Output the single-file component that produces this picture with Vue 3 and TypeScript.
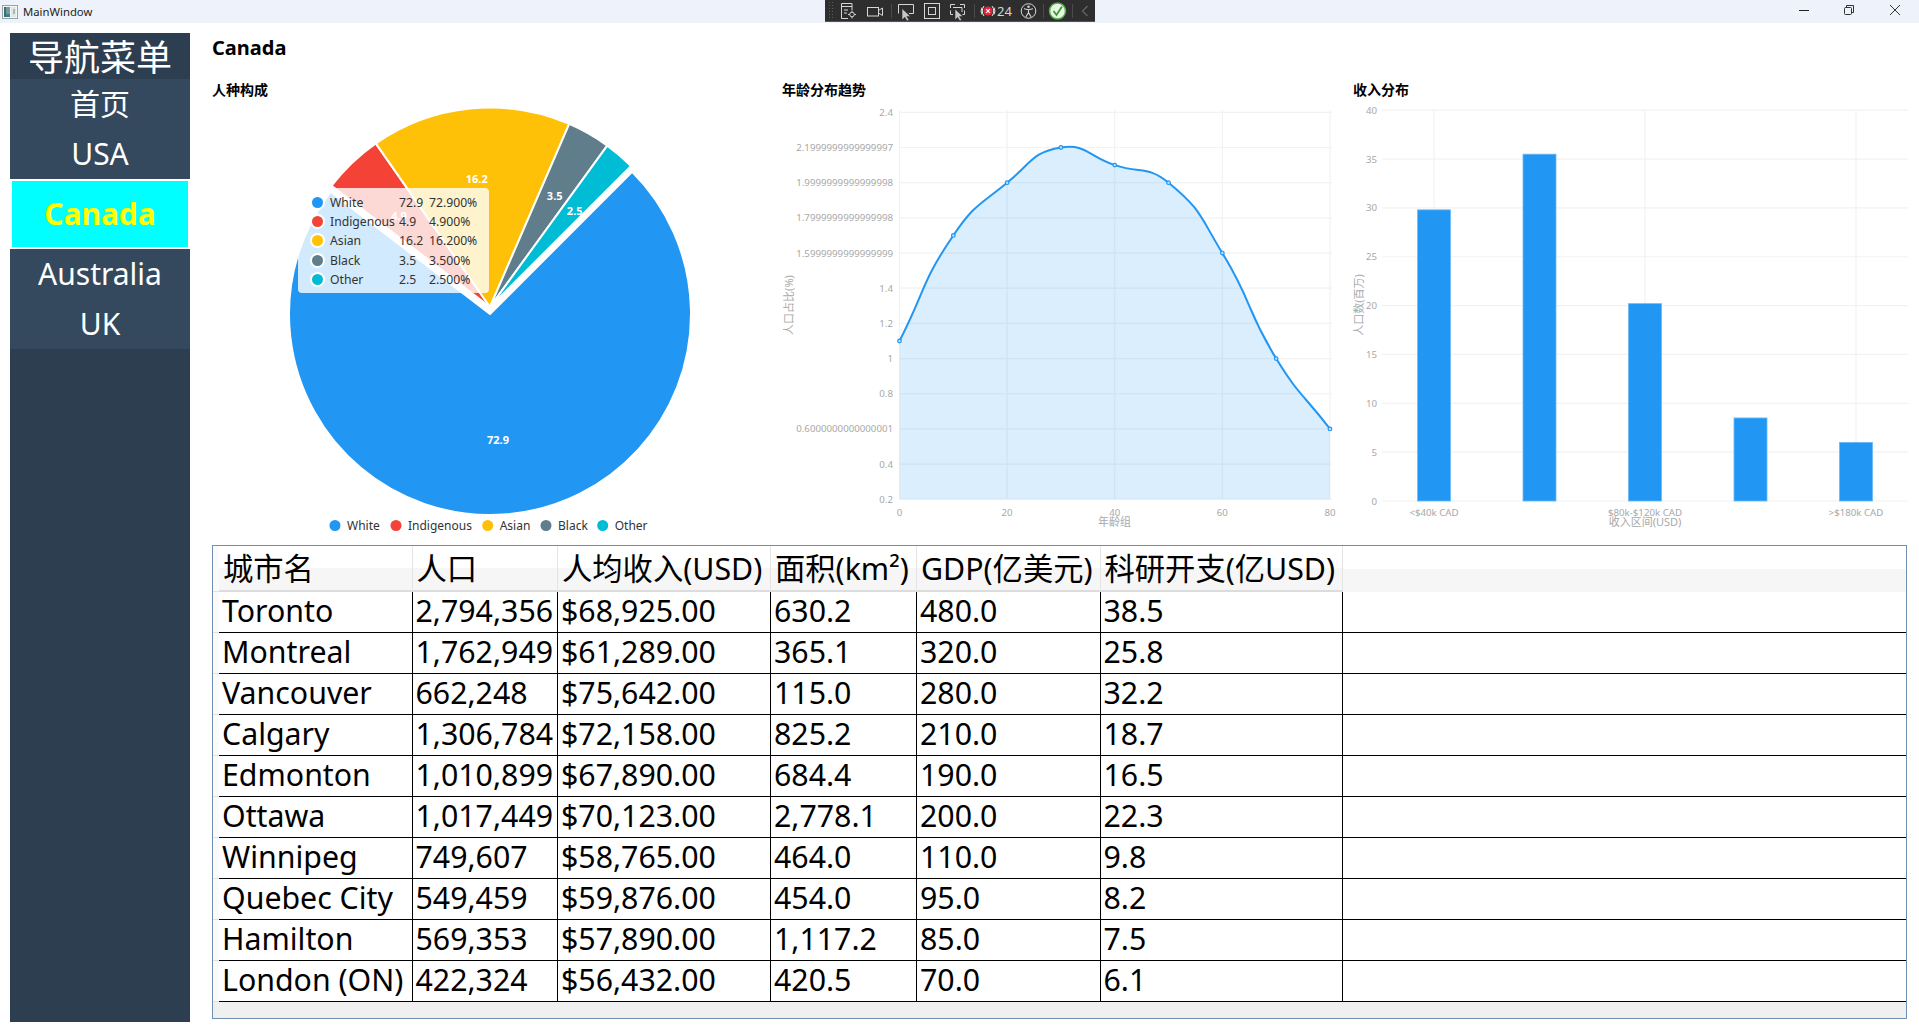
<script setup lang="ts">
const navItems = [
  { label: '首页', active: false },
  { label: 'USA', active: false },
  { label: 'Canada', active: true },
  { label: 'Australia', active: false },
  { label: 'UK', active: false },
]

interface Slice { name: string; value: number; color: string }
const slices: Slice[] = [
  { name: 'White', value: 72.9, color: '#2196F3' },
  { name: 'Indigenous', value: 4.9, color: '#F44336' },
  { name: 'Asian', value: 16.2, color: '#FFC107' },
  { name: 'Black', value: 3.5, color: '#607D8B' },
  { name: 'Other', value: 2.5, color: '#00BCD4' },
]
const pieLabels = [
  { t: '4.9', x: 399, y: 216 },
  { t: '16.2', x: 476.7, y: 179 },
  { t: '3.5', x: 554.7, y: 196 },
  { t: '2.5', x: 574.7, y: 211 },
  { t: '72.9', x: 498, y: 440 },
]
const legend = [
  { name: 'White', cx: 335, color: '#2196F3' },
  { name: 'Indigenous', cx: 396, color: '#F44336' },
  { name: 'Asian', cx: 487.7, color: '#FFC107' },
  { name: 'Black', cx: 546, color: '#607D8B' },
  { name: 'Other', cx: 602.7, color: '#00BCD4' },
]

function polar(cx: number, cy: number, r: number, deg: number): [number, number] {
  const a = (deg * Math.PI) / 180
  return [cx + r * Math.sin(a), cy - r * Math.cos(a)]
}
let angle = 45
const pieSlices = slices.map((s, i) => {
  const sweep = (s.value / 100) * 360
  const cx = 490
  const cy = i === 0 ? 314 : 307
  const r = i === 0 ? 201 : 199.5
  const [x0, y0] = polar(cx, cy, r, angle)
  const [x1, y1] = polar(cx, cy, r, angle + sweep)
  const large = sweep > 180 ? 1 : 0
  const d = `M${cx} ${cy}L${x0.toFixed(2)} ${y0.toFixed(2)}A${r} ${r} 0 ${large} 1 ${x1.toFixed(2)} ${y1.toFixed(2)}Z`
  angle += sweep
  return { d, color: s.color }
})

// line chart
const lx = (v: number) => 899.5 + v * 5.381
const ly = (v: number) => 499.3 - ((v - 0.2) / 0.2) * 35.18
const lineTicks = ['2.4', '2.1999999999999997', '1.9999999999999998', '1.7999999999999998', '1.5999999999999999', '1.4', '1.2', '1', '0.8', '0.6000000000000001', '0.4', '0.2']
  .map((t, i) => ({ t, y: ly(2.4 - i * 0.2) }))
const lineXTicks = [0, 20, 40, 60, 80].map((v) => ({ t: String(v), x: lx(v) }))
const linePts = [
  [0, 1.1], [10, 1.7], [20, 2.0], [30, 2.2], [40, 2.1], [50, 2.0], [60, 1.6], [70, 1.0], [80, 0.6],
].map(([a, b]) => ({ x: lx(a), y: ly(b) }))

function smoothPath(p: { x: number; y: number }[]): string {
  const s = 0.5
  const cps = p.map((pt, i) => {
    const prev = p[Math.max(i - 1, 0)]
    const next = p[Math.min(i + 1, p.length - 1)]
    const d0 = Math.hypot(pt.x - prev.x, pt.y - prev.y)
    const d1 = Math.hypot(pt.x - next.x, pt.y - next.y)
    const ratio = d1 / (d0 + d1 || 1)
    const vx = (next.x - prev.x) * s
    const vy = (next.y - prev.y) * s
    return {
      inX: pt.x - vx * (1 - ratio), inY: pt.y - vy * (1 - ratio),
      outX: pt.x + vx * ratio, outY: pt.y + vy * ratio,
    }
  })
  let d = `M${p[0].x} ${p[0].y}`
  for (let i = 1; i < p.length; i++) {
    d += `C${cps[i - 1].outX.toFixed(2)} ${cps[i - 1].outY.toFixed(2)} ${cps[i].inX.toFixed(2)} ${cps[i].inY.toFixed(2)} ${p[i].x.toFixed(2)} ${p[i].y.toFixed(2)}`
  }
  return d
}
const linePath = smoothPath(linePts)
const lineArea = `${linePath}L${lx(80)} ${ly(0.2)}L${lx(0)} ${ly(0.2)}Z`

// bar chart
const by = (v: number) => 501 - v * 9.77
const barTicks = [40, 35, 30, 25, 20, 15, 10, 5, 0].map((v) => ({ t: String(v), y: by(v) }))
const bars = [29.8, 35.5, 20.2, 8.5, 6].map((v, i) => ({
  x: 1434 + i * 105.5 - 16.5, y: by(v), h: v * 9.77,
}))
const barLabels = [
  { t: '<$40k CAD', x: 1434 },
  { t: '$80k-$120k CAD', x: 1645 },
  { t: '>$180k CAD', x: 1856 },
]

const headers = ['城市名', '人口', '人均收入(USD)', '面积(km²)', 'GDP(亿美元)', '科研开支(亿USD)']
const rows = [
  ['Toronto', '2,794,356', '$68,925.00', '630.2', '480.0', '38.5'],
  ['Montreal', '1,762,949', '$61,289.00', '365.1', '320.0', '25.8'],
  ['Vancouver', '662,248', '$75,642.00', '115.0', '280.0', '32.2'],
  ['Calgary', '1,306,784', '$72,158.00', '825.2', '210.0', '18.7'],
  ['Edmonton', '1,010,899', '$67,890.00', '684.4', '190.0', '16.5'],
  ['Ottawa', '1,017,449', '$70,123.00', '2,778.1', '200.0', '22.3'],
  ['Winnipeg', '749,607', '$58,765.00', '464.0', '110.0', '9.8'],
  ['Quebec City', '549,459', '$59,876.00', '454.0', '95.0', '8.2'],
  ['Hamilton', '569,353', '$57,890.00', '1,117.2', '85.0', '7.5'],
  ['London (ON)', '422,324', '$56,432.00', '420.5', '70.0', '6.1'],
]
</script>

<template>
  <div class="window">
    <header class="titlebar">
      <div class="title-left">
        <svg class="app-icon" width="16" height="14" viewBox="0 0 16 14">
          <rect x="0.5" y="0.5" width="15" height="13" fill="#f4f6f6" stroke="#9aa3a6" />
          <rect x="2" y="2" width="2" height="10" fill="#3f6f6a" />
          <rect x="4" y="2" width="4" height="7" fill="#6f9f96" />
          <rect x="4" y="9" width="4" height="3" fill="#3d7f96" />
          <rect x="9" y="2" width="5" height="10" fill="#dfe6e6" />
          <rect x="11" y="4" width="2" height="5" fill="#a8b8b8" />
        </svg>
        <span class="win-title">MainWindow</span>
      </div>
      <div class="toolbar">
        <svg width="270" height="22" viewBox="0 0 270 22">
          <g fill="#5a5a5a">
            <rect x="4" y="2" width="1" height="1" /><rect x="7" y="2" width="1" height="1" />
            <rect x="4" y="5" width="1" height="1" /><rect x="7" y="5" width="1" height="1" />
            <rect x="4" y="8" width="1" height="1" /><rect x="7" y="8" width="1" height="1" />
            <rect x="4" y="11" width="1" height="1" /><rect x="7" y="11" width="1" height="1" />
            <rect x="4" y="14" width="1" height="1" /><rect x="7" y="14" width="1" height="1" />
            <rect x="4" y="17" width="1" height="1" /><rect x="7" y="17" width="1" height="1" />
          </g>
          <g fill="none" stroke="#d6d6d6" stroke-width="1">
            <path d="M23 18.5H16.5V3.5H27V10" />
            <path d="M16.5 6.5H27M19 10H23M19 13H22" />
            <circle cx="27" cy="14.5" r="2.3" />
            <path d="M27 10.5v1.6M27 16.9v1.6M23 14.5h1.6M29.4 14.5H31" />
            <rect x="42.5" y="7.5" width="11" height="8.5" />
            <path d="M53.500 10.500 57.500 8V15.500L53.500 13" />
            <path d="M73.500 13.500V4.500H88.500V13.500H84" />
            <rect x="99.500" y="3.500" width="15" height="15" />
            <rect x="103.500" y="7.500" width="7" height="7" />
            <path d="M125.500 8V4.500H130M135 4.500H139.500V8M125.500 10.500V14.500H128M139.500 10.500V14.500H137.500" />
            <path d="M128 7.500H137V12" />
          </g>
          <path d="M77 8.500V20L79.800 17.200 82 21 84 20 81.800 16.400H85.500Z" fill="#c8c8c8" stroke="#2e2e2e" stroke-width=".6" />
          <path d="M130 9V20L132.600 17.400 134.800 21 136.600 20 134.600 16.500H138Z" fill="#c8c8c8" stroke="#2e2e2e" stroke-width=".6" />
          <g stroke="#4a4a4a">
            <path d="M66.500 4V18M149.500 4V18M218.500 4V18M247.500 4V18" />
          </g>
          <path d="M159 6Q155.500 11 159 16M167 6Q170.500 11 167 16M157 7.500Q155 11 157 14.500M169 7.500Q171 11 169 14.500" fill="none" stroke="#e8e8e8" stroke-width="1" />
          <circle cx="163" cy="11" r="4.600" fill="#e5273a" />
          <path d="M161.200 9.200 164.800 12.800M164.800 9.200 161.200 12.800" stroke="#fff" stroke-width="1.200" />
          <text class="tb-num" x="172" y="16">24</text>
          <circle cx="203.500" cy="11" r="7.300" fill="none" stroke="#d6d6d6" />
          <circle cx="203.500" cy="6.800" r="1.200" fill="#d6d6d6" />
          <path d="M199 8.800 203.500 9.800 208 8.800M203.500 9.800V12.500M203.500 12.500 200.800 17M203.500 12.500 206.200 17" fill="none" stroke="#d6d6d6" stroke-width="1.100" />
          <circle cx="232.500" cy="11" r="8" fill="#e9f5e6" stroke="#4fae3f" stroke-width="1.500" />
          <path d="M228.500 11 231.500 15 237 6.500" fill="none" stroke="#3a9e2c" stroke-width="1.800" />
          <path d="M262.500 6 257.500 11 262.500 16" fill="none" stroke="#666" stroke-width="1.200" />
        </svg>
      </div>
      <div class="controls">
        <svg width="120" height="23" viewBox="1799 0 120 23">
          <path d="M1799 10.500H1809" stroke="#222" stroke-width="1" />
          <g fill="none" stroke="#333" stroke-width="1">
            <rect x="1844.500" y="7.500" width="7" height="7" rx="1" />
            <path d="M1846.500 7.500V5.500H1853.500V12.500H1851.500" />
          </g>
          <path d="M1890 5 1900 15M1900 5 1890 15" stroke="#333" stroke-width="1" />
        </svg>
      </div>
    </header>

    <main class="body">
      <nav class="sidebar">
        <div class="nav-title">导航菜单</div>
        <div v-for="item in navItems" :key="item.label" class="nav-item" :class="{ active: item.active }">
          {{ item.label }}
        </div>
      </nav>

      <section class="content">
        <h1 class="page-title">Canada</h1>
        <div class="charts">
          <div class="panel">
            <h2 class="panel-title">人种构成</h2>
            <svg class="chart" viewBox="212 100 570 445">
              <path v-for="(s, i) in pieSlices" :key="i" :d="s.d" :fill="s.color" stroke="#fff" stroke-width="2" stroke-linejoin="round" />
              <text v-for="l in pieLabels" :key="l.t" class="pie-label" :x="l.x" :y="l.y + 4" text-anchor="middle">{{ l.t }}</text>
              <g v-for="l in legend" :key="l.name">
                <circle :cx="l.cx" cy="525.5" r="5.5" :fill="l.color" />
                <text class="legend-text" :x="l.cx + 12" y="530">{{ l.name }}</text>
              </g>
            </svg>
            <div class="tooltip">
              <template v-for="s in slices" :key="s.name">
                <span class="tip-dot-cell"><i class="tip-dot" :style="{ background: s.color }"></i></span>
                <span>{{ s.name }}</span>
                <span>{{ s.value }}</span>
                <span>{{ s.value.toFixed(3) }}%</span>
              </template>
            </div>
          </div>

          <div class="panel">
            <h2 class="panel-title">年龄分布趋势</h2>
            <svg class="chart" viewBox="782 100 571 445">
              <g class="grid">
                <line v-for="t in lineTicks" :key="t.t" x1="899.500" x2="1332" :y1="t.y" :y2="t.y" />
                <line v-for="t in lineXTicks" :key="t.t" :x1="t.x" :x2="t.x" y1="110" y2="499.300" />
              </g>
              <path :d="lineArea" fill="#2196F3" fill-opacity="0.16" />
              <path :d="linePath" fill="none" stroke="#2196F3" stroke-width="2" />
              <circle v-for="(p, i) in linePts" :key="i" :cx="p.x" :cy="p.y" r="1.800" fill="#bfe0fb" stroke="#2196F3" stroke-width="1.200" />
              <text v-for="t in lineTicks" :key="t.t" class="tick" x="893" :y="t.y + 3.500" text-anchor="end">{{ t.t }}</text>
              <text v-for="t in lineXTicks" :key="t.t" class="tick" :x="t.x" y="515.500" text-anchor="middle">{{ t.t }}</text>
              <text class="axis-name" x="1114.600" y="525.500" text-anchor="middle">年龄组</text>
              <text class="axis-name" transform="translate(793 305) rotate(-90)" text-anchor="middle">人口占比(%)</text>
            </svg>
          </div>

          <div class="panel">
            <h2 class="panel-title">收入分布</h2>
            <svg class="chart" viewBox="1353 100 554 445">
              <g class="grid">
                <line v-for="t in barTicks" :key="t.t" x1="1382" x2="1908" :y1="t.y" :y2="t.y" />
                <line v-for="l in barLabels" :key="l.t" :x1="l.x" :x2="l.x" :y1="by(40)" :y2="by(0)" />
              </g>
              <rect v-for="(b, i) in bars" :key="i" :x="b.x" :y="b.y" width="33" :height="b.h" fill="#2196F3" stroke="#6cbaf7" stroke-width="0.800" />
              <text v-for="t in barTicks" :key="t.t" class="tick" x="1377" :y="t.y + 3.500" text-anchor="end">{{ t.t }}</text>
              <text v-for="l in barLabels" :key="l.t" class="tick" :x="l.x" y="515.500" text-anchor="middle">{{ l.t }}</text>
              <text class="axis-name" x="1645" y="525.500" text-anchor="middle">收入区间(USD)</text>
              <text class="axis-name" transform="translate(1363 305) rotate(-90)" text-anchor="middle">人口数(百万)</text>
            </svg>
          </div>
        </div>

        <div class="table-wrap">
          <table class="data">
            <colgroup>
              <col class="c0" /><col class="c1" /><col class="c2" /><col class="c3" /><col class="c4" /><col class="c5" /><col class="c6" /><col />
            </colgroup>
            <thead>
              <tr>
                <th class="gutter"></th>
                <th v-for="h in headers" :key="h">{{ h }}</th>
                <th class="filler"></th>
              </tr>
            </thead>
            <tbody>
              <tr v-for="row in rows" :key="row[0]">
                <td class="gutter"></td>
                <td v-for="(c, i) in row" :key="i">{{ c }}</td>
                <td class="filler"></td>
              </tr>
            </tbody>
          </table>
        </div>
      </section>
    </main>
  </div>
</template>

<style>
html, body { margin: 0; background: #fff; }
</style>

<style scoped>
.window {
  width: 1919px;
  height: 1031px;
  display: flex;
  flex-direction: column;
  background: #fff;
  overflow: hidden;
  font-family: "Noto Sans", "Noto Sans CJK SC", sans-serif;
  color: #000;
}
.titlebar {
  height: 23px;
  flex: none;
  display: grid;
  grid-template-columns: 1fr auto 1fr;
  background: #eef2fa;
}
.title-left { display: flex; align-items: center; padding-left: 2px; gap: 5px; }
.app-icon { display: block; }
.win-title { font-size: 11.300px; color: #222; }
.toolbar {
  height: 22px;
  width: 270px;
  background: #2e2e2e;
  box-shadow: inset 0 -1px 0 #555;
}
.toolbar svg { display: block; }
.tb-num { font-size: 13px; fill: #d6d6d6; font-family: "Noto Sans", sans-serif; }
.controls { display: flex; justify-content: flex-end; }
.controls svg { display: block; }

.body {
  flex: 1;
  min-height: 0;
  display: flex;
  gap: 22px;
  padding: 10px 12px 9px 10px;
}
.sidebar {
  width: 180px;
  flex: none;
  background: #2c3e50;
  color: #fff;
  text-align: center;
}
.nav-title { height: 46px; line-height: 50px; font-size: 36px; }
.nav-item {
  height: 50px;
  line-height: 50px;
  font-size: 30px;
  background: #34495e;
}
.nav-item.active {
  height: 70px;
  box-sizing: border-box;
  line-height: 66px;
  border: 2px solid #fff;
  background: #00ffff;
  color: #ffff00;
  font-weight: 700;
}

.content { flex: 1; min-width: 0; display: flex; flex-direction: column; }
.page-title { margin: 0; height: 30px; line-height: 29px; font-size: 20px; font-weight: 700; }
.charts {
  margin-top: 17px;
  height: 465px;
  flex: none;
  display: grid;
  grid-template-columns: 570px 571px 554px;
}
.panel { position: relative; min-width: 0; }
.panel-title { margin: 0; height: 20px; line-height: 20px; font-size: 14px; font-weight: 700; }
.chart { display: block; width: 100%; height: 445px; overflow: visible; }
.pie-label { font-size: 11px; font-weight: 700; fill: #fff; }
.legend-text { font-size: 12px; fill: #333; }
.grid line { stroke: #f2f2f2; stroke-width: 1.200; }
.tick { font-size: 9.700px; fill: #a8a8a8; }
.axis-name { font-size: 11px; fill: #a8a8a8; }

.tooltip {
  position: absolute;
  left: 86px;
  top: 108px;
  width: 191px;
  height: 105px;
  box-sizing: border-box;
  padding: 5px 0 0 14px;
  display: grid;
  grid-template-columns: 18px 69px 30px auto;
  grid-auto-rows: 19.200px;
  align-items: center;
  justify-content: start;
  font-size: 12.200px;
  color: #333;
  background: rgba(255, 255, 255, 0.8);
  border-radius: 4px;
}
.tip-dot-cell { display: flex; align-items: center; }
.tip-dot {
  display: block;
  width: 11px;
  height: 11px;
  border-radius: 50%;
  box-shadow: 0 0 0 2px #fff;
}

.table-wrap {
  height: 474px;
  box-sizing: border-box;
  border: 1px solid #6f8fb5;
  background: #f0f0f0;
}
.data {
  width: 100%;
  table-layout: fixed;
  border-collapse: separate;
  border-spacing: 0;
  font-size: 30.300px;
  background: #fff;
}
.c0 { width: 6px; }
.c1 { width: 193.500px; }
.c2 { width: 145.500px; }
.c3 { width: 213px; }
.c4 { width: 146px; }
.c5 { width: 183.500px; }
.c6 { width: 242px; }
th {
  height: 46px;
  box-sizing: border-box;
  padding: 2px 0 0 4px;
  font-weight: 400;
  text-align: left;
  white-space: nowrap;
  line-height: 42px;
  background: linear-gradient(#ffffff 0 50%, #f6f6f6 50% 100%);
  border-right: 1px solid #e4e4e4;
  border-bottom: 2px solid #dcdcdc;
}
th.filler { border-right: 0; border-bottom: 0; }
td {
  height: 41px;
  box-sizing: border-box;
  padding: 0 0 2px 3px;
  white-space: nowrap;
  line-height: 38px;
  overflow: visible;
  border-right: 1px solid #000;
  border-bottom: 1px solid #000;
}
td.filler { border-right: 0; }
td.gutter, th.gutter {
  padding: 0;
  background: #fafafa;
  border-right: 0;
  border-bottom: 1px solid #e2e2e2;
}
</style>
